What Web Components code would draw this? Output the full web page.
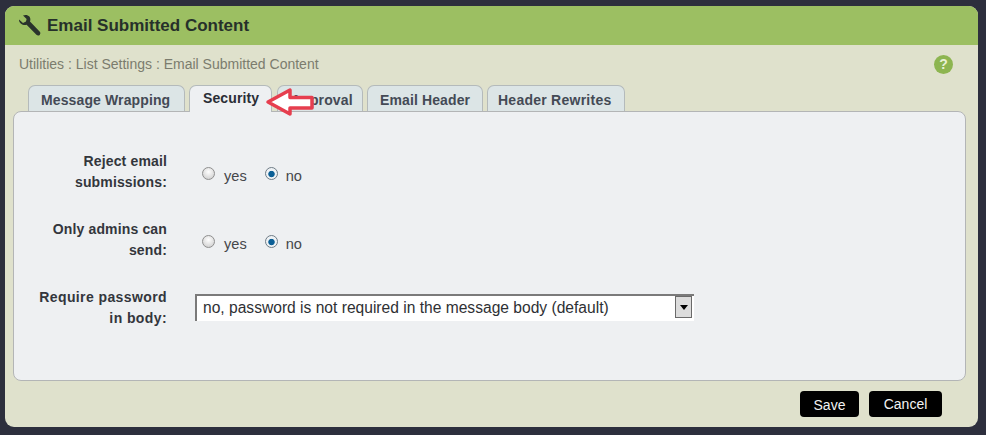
<!DOCTYPE html>
<html><head><meta charset="utf-8">
<style>
html,body{margin:0;height:435px;background:#2d2f3d;overflow:hidden}
body{font-family:"Liberation Sans",Arial,sans-serif}
</style></head><body>
<settings-dialog heading="Email Submitted Content">
  <span slot="crumbs">Utilities : List Settings : Email Submitted Content</span>
  <tab-strip slot="tabs">
    <tab-item style="--w:157px;--p:12px">Message Wrapping</tab-item>
    <tab-item active style="--w:83px;--p:13px;margin-right:1px">Security</tab-item>
    <tab-item style="--w:86px;--p:13px">Approval</tab-item>
    <tab-item style="--w:116px;--p:12px">Email Header</tab-item>
    <tab-item style="--w:138px;--p:10px;--ls:.25px">Header Rewrites</tab-item>
  </tab-strip>
  <form-row label="Reject email submissions:"><radio-pair></radio-pair></form-row>
  <form-row label="Only admins can send:"><radio-pair></radio-pair></form-row>
  <form-row label="Require password in body:" style="--ls:.4px"><select-box>no, password is not required in the message body (default)</select-box></form-row>
</settings-dialog>
<script>
function def(name,html,init){customElements.define(name,class extends HTMLElement{constructor(){super();this.attachShadow({mode:'open'}).innerHTML=html;}connectedCallback(){if(init)init(this,this.shadowRoot);}});}
def('settings-dialog',`<style>
:host{display:flex;flex-direction:column;box-sizing:border-box;width:973px;height:421px;margin:6px 0 0 5px;border-radius:9px;background:#dfe1cc;overflow:hidden;position:relative}
header{height:39px;flex:none;background:#9cbf62;display:flex;align-items:center;padding-left:13px;gap:6px;color:#26302a;font:bold 17px "Liberation Sans",Arial,sans-serif}
.crumb{height:38px;flex:none;display:flex;align-items:center;justify-content:space-between;padding:0 25px 0 14px;color:#7b7c6e;font-size:14px}
.help{width:19px;height:19px;border-radius:50%;background:#8db550;color:#e8f0d4;font:bold 14px/19px "Liberation Sans",Arial,sans-serif;text-align:center}
.tabs{height:26px;flex:none;padding:2px 0 0 23px;position:relative;z-index:1}
.panel{box-sizing:border-box;height:270px;flex:none;margin:0 12px 0 8px;background:#eef0f2;border:1px solid #b3b5b6;border-radius:8px;padding:39px 0 0 0;display:flex;flex-direction:column}
footer{flex:1;display:flex;justify-content:flex-end;gap:10px;padding:10px 36px 0 0}
button{height:26px;border:0;border-radius:4px;background:#000;color:#f2f2f2;font:14px "Liberation Sans",Arial,sans-serif;padding:0;margin:0}
.save{width:59px;padding-top:2px}.cancel{width:73px}
.arrow{position:absolute;z-index:2;left:260px;top:80px;width:50px;height:32px}
</style>
<header><svg width="23" height="23" viewBox="0 0 23 23"><path d="M1 5.500 5 9l3-1.600L8.600 5 5 1.600C7 .4 10 .8 11.400 2.600c1.200 1.500 1.200 3.400.6 4.800l9.600 10.200c1 1.100 1 2.400.1 3.300-.9.900-2.300.9-3.300-.1L8.600 10.800C6.700 11.400 4.500 11 3 9.700 1.600 8.500.8 7 1 5.500z" fill="#2a332c"/></svg><span id="h"></span></header>
<div class="crumb"><slot name="crumbs"></slot><div class="help">?</div></div>
<div class="tabs"><slot name="tabs"></slot></div>
<div class="panel"><slot></slot></div>
<footer><button class="save">Save</button><button class="cancel">Cancel</button></footer>
<svg class="arrow" viewBox="0 0 50 32"><path d="M3 16 25 4v7.500h22V22H25v6z" fill="#fff" stroke="#e63e4e" stroke-width="3.500" stroke-linejoin="round"/></svg>`,(el,s)=>{s.getElementById('h').textContent=el.getAttribute('heading');});
def('tab-strip',`<style>:host{display:flex;gap:4px;height:26px;align-items:flex-start}</style><slot></slot>`);
def('tab-item',`<style>:host{display:block;box-sizing:border-box;width:var(--w);height:26px;padding:6px 0 0 var(--p);background:#dce5e6;border:1px solid #b4babb;border-bottom:0;border-radius:7px 7px 0 0;color:#444a55;font:bold 14px/17px "Liberation Sans",Arial,sans-serif;letter-spacing:var(--ls,.12px);white-space:nowrap}
:host([active]){background:#eef0f2;color:#2a2d35;height:27px;padding-top:4px}</style><slot></slot>`);
def('form-row',`<style>:host{display:flex;flex:none;align-items:flex-start;height:68px}
.l{box-sizing:border-box;width:153px;text-align:right;color:#33363c;font:bold 14px/21px "Liberation Sans",Arial,sans-serif;letter-spacing:var(--ls,.15px);padding-left:20px}
.c{margin-left:28px;display:flex;align-items:flex-start}</style><div class="l" id="l"></div><div class="c"><slot></slot></div>`,(el,s)=>{s.getElementById('l').textContent=el.getAttribute('label');});
def('radio-pair',`<style>:host{display:flex;align-items:center;color:#45474b;font:14.6px/17px "Liberation Sans",Arial,sans-serif;margin-top:17px;padding-left:6px}
i{display:block;box-sizing:border-box;width:13px;height:13px;border-radius:50%;border:1px solid #8f8f8f;background:radial-gradient(circle at 50% 35%,#fff,#c8c8c8);margin-top:-7px;margin-left:1px}
i.on{background:radial-gradient(circle at 50% 55%,#0b5f96 0 2.8px,#eef2f5 3.6px);border-color:#6f7c86}
span{margin-left:9px;margin-right:17px}
span.n{margin-left:8px}</style><i></i><span>yes</span><i class="on"></i><span class="n">no</span>`);
def('select-box',`<style>:host{display:flex;box-sizing:border-box;width:499px;height:27px;margin-top:7px;background:#fff;border-top:2px solid #7a7a7a;border-left:2px solid #7a7a7a;color:#2e3034;font:15.6px/22px "Liberation Sans",Arial,sans-serif}
.t{flex:1;padding:1px 0 0 6px;white-space:nowrap}
.b{box-sizing:border-box;width:17px;height:22px;background:#dcdcdc;border:1px solid #6a6a6a;display:flex;align-items:center;justify-content:center}
.b:after{content:"";border:4px solid transparent;border-top:5px solid #000;border-bottom:0;}
.pad{width:2px}</style><div class="t"><slot></slot></div><div class="b"></div><div class="pad"></div>`);
</script>
</body></html>
